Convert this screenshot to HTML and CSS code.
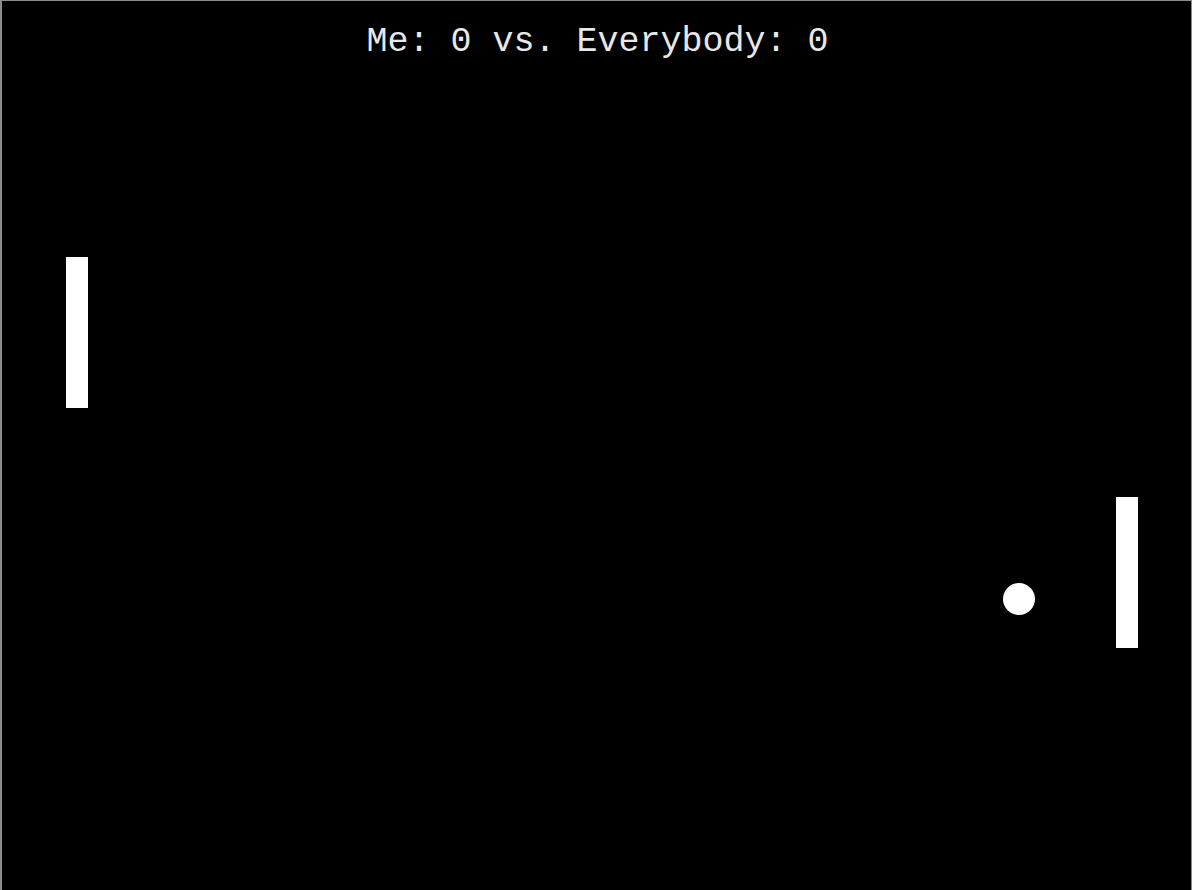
FILE: index.html
```html
<!DOCTYPE html>
<html lang="en">
<head>
<meta charset="utf-8">
<title>Pong</title>
<link rel="stylesheet" href="styles.css">
</head>
<body>
<main class="board">
  <div class="score">Me: 0 vs. Everybody: 0</div>
  <div class="paddle paddle-left"></div>
  <div class="paddle paddle-right"></div>
  <div class="ball"></div>
</main>
</body>
</html>
```

FILE: styles.css
```css
html, body {
  margin: 0;
  padding: 0;
  background: #000;
  height: 100%;
  overflow: hidden;
}

.board {
  position: relative;
  box-sizing: border-box;
  width: 1192px;
  height: 900px;
  background: #000;
  border-top: 1px solid #8c8c8c;
  border-left: 2px solid #8c8c8c;
  border-right: 1px solid #8c8c8c;
  padding-top: 21px;
}

.score {
  font-family: "Liberation Mono", "Courier New", monospace;
  font-size: 35px;
  line-height: 40px;
  color: #e8e8e8;
  text-align: center;
  padding-left: 2px;
}

.paddle {
  position: absolute;
  width: 22px;
  height: 151px;
  background: #fff;
}

.paddle-left {
  left: 64px;
  top: 256px;
}

.paddle-right {
  left: 1114px;
  top: 496px;
}

.ball {
  position: absolute;
  left: 1001px;
  top: 582px;
  width: 32px;
  height: 32px;
  border-radius: 50%;
  background: #fff;
}
```
